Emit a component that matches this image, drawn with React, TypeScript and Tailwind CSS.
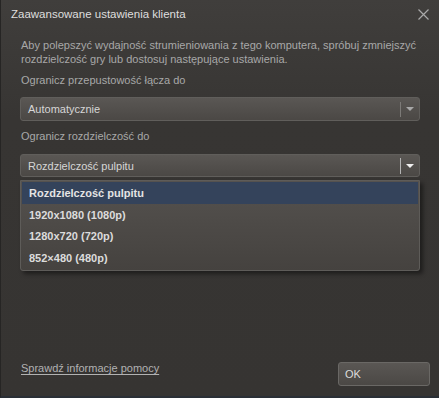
import React from "react";

function Arrow({ color }: { color: string }) {
  return (
    <svg width="8" height="4" viewBox="0 0 8 4" className="block">
      <path d="M0 0 L8 0 L4 4 Z" fill={color} />
    </svg>
  );
}

export default function App() {
  const items = ["Rozdzielczość pulpitu", "1920x1080 (1080p)", "1280x720 (720p)", "852×480 (480p)"];
  return (
    <div
      className="relative w-[439px] h-[398px] overflow-hidden border-l border-[#262524] border-b-2 border-b-[#2a2f36] bg-gradient-to-b from-[#403e3c] via-[#373533] via-[30%] to-[#363432] text-[11px] leading-[14px]"
      style={{ fontFamily: '"Liberation Sans", Arial, sans-serif' }}
    >
      <div className="flex items-center justify-between h-[27px] pl-[10px] pr-[10px]">
        <span className="text-[11.5px] text-[#dedede] pt-[1px]">Zaawansowane ustawienia klienta</span>
        <svg width="11" height="11" viewBox="0 0 11 11" className="mt-[1px]">
          <path d="M0.5 0.5 L10.5 10.5 M10.5 0.5 L0.5 10.5" stroke="#a9a9a9" strokeWidth="1.2" />
        </svg>
      </div>
      <div className="px-[19px]">
        <p className="mt-[11px] pl-px text-[#a8a8a8]">
          Aby polepszyć wydajność strumieniowania z tego komputera, spróbuj zmniejszyć rozdzielczość gry lub dostosuj następujące ustawienia.
        </p>
        <div className="mt-[7px] pl-px text-[#a8a8a8]">Ogranicz przepustowość łącza do</div>
        <div className="mt-[10px] h-[24px] flex items-center rounded-[3px] border border-[#605e5b] bg-gradient-to-b from-[#5a5754] to-[#4b4845]">
          <span className="flex-1 pl-[7px] text-[#d6d6d6]">Automatycznie</span>
          <div className="w-px h-[15px] bg-[#7c7a77]" />
          <div className="w-[18px] flex justify-center">
            <Arrow color="#a8a8a8" />
          </div>
        </div>
        <div className="mt-[8px] pl-px text-[#a8a8a8]">Ogranicz rozdzielczość do</div>
        <div className="relative mt-[11px]">
          <div className="h-[23px] flex items-center rounded-[3px] border border-[#605e5b] bg-gradient-to-b from-[#5a5754] to-[#4b4845]">
            <span className="flex-1 pl-[7px] text-[#d6d6d6]">Rozdzielczość pulpitu</span>
            <div className="w-px h-[16px] bg-[#b4b4b4]" />
            <div className="w-[18px] flex justify-center">
              <Arrow color="#f0f0f0" />
            </div>
          </div>
          <div className="absolute left-0 right-0 top-[26px] flex flex-col p-px rounded-b-[3px] border border-[#5e5c59] bg-gradient-to-b from-[#55524f] to-[#45423f] shadow-[3px_3px_4px_rgba(0,0,0,0.45)]">
            {items.map((t, i) => (
              <div
                key={t}
                className={
                  i === 0
                    ? "h-[22px] flex items-center pl-[7px] font-bold text-[#e4e4e4] bg-[#34435b]"
                    : "h-[21.5px] flex items-center pl-[7px] font-bold text-[#dcdcdc]"
                }
              >
                {t}
              </div>
            ))}
          </div>
        </div>
      </div>
      <div className="absolute left-0 right-0 bottom-[10px] flex items-end justify-between pl-[19px] pr-[9px]">
        <span className="mb-[11px] pl-px text-[#b2b2b2] underline underline-offset-[2px]">Sprawdź informacje pomocy</span>
        <div className="w-[92px] h-[24px] flex items-center pl-[6px] rounded-[3px] border border-[#6a6865] bg-gradient-to-b from-[#5a5754] to-[#4b4845] text-[#dcdcdc]">
          OK
        </div>
      </div>
    </div>
  );
}
